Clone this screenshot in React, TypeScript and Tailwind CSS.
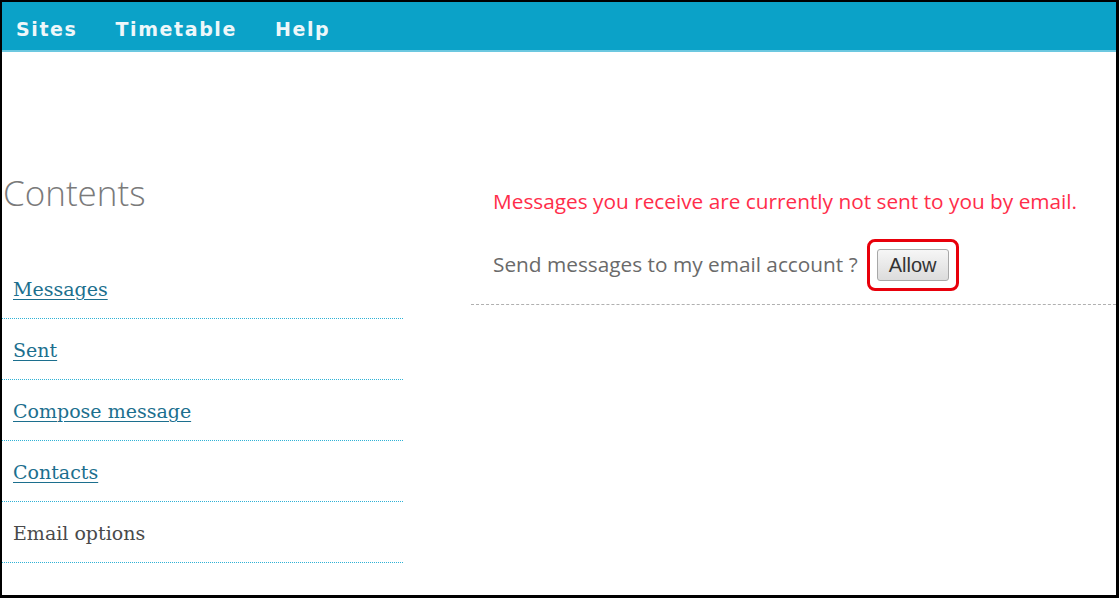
export default function App() {
  const links = [
    { label: "Messages", link: true },
    { label: "Sent", link: true },
    { label: "Compose message", link: true },
    { label: "Contacts", link: true },
    { label: "Email options", link: false },
  ];

  return (
    <div className="w-[1119px] h-[598px] bg-white border-l-2 border-t-2 border-r-[3px] border-b-[3px] border-black overflow-hidden">
      {/* Top nav */}
      <div className="h-[50px] bg-[#0ba2c8] border-b-2 border-[#6cc8e0] flex items-center pl-[14px] pt-[7px] gap-[38px] font-['DejaVu_Sans',sans-serif] font-semibold text-[19px] tracking-[1.6px] text-[#eef7fa]">
        <span>Sites</span>
        <span>Timetable</span>
        <span>Help</span>
      </div>

      <div className="flex">
        {/* Sidebar */}
        <div className="w-[401px] shrink-0 pt-[118px]">
          <h1 className="pl-px font-['Open_Sans',sans-serif] font-light text-[35px] leading-[46px] text-[#7a7a7a]">
            Contents
          </h1>
          <ul className="mt-[42px] font-['DejaVu_Serif',serif] text-[19px]">
            {links.map((l) => (
              <li
                key={l.label}
                className="h-[61px] border-b border-dotted border-[#2fb2d6] pl-[11px] pt-[17px]"
              >
                {l.link ? (
                  <a href="#" className="text-[#1c6f8e] underline underline-offset-[3px] decoration-[1px]">
                    {l.label}
                  </a>
                ) : (
                  <span className="text-[#4a4a4a]">{l.label}</span>
                )}
              </li>
            ))}
          </ul>
        </div>

        {/* Main */}
        <div className="flex-1 ml-[68px] pt-[134px] font-['Open_Sans',sans-serif] text-[20.8px]">
          <p className="pl-[22px] text-[#ff2d4a] leading-[30px]">
            Messages you receive are currently not sent to you by email.
          </p>
          <div className="pl-[22px] mt-[23px] flex items-center">
            <span className="text-[#6a6a6a]">Send messages to my email account ?</span>
            <span className="ml-[9px] rounded-[8px] border-[3px] border-[#e8000b] p-[7px]">
              <button className="block h-[32px] w-[72px] rounded-[3px] border border-[#a8a8a8] bg-gradient-to-b from-[#f6f6f6] to-[#dcdcdc] font-['Liberation_Sans',sans-serif] text-[20px] text-[#333] leading-none">
                Allow
              </button>
            </span>
          </div>
          <div className="mt-[13px] border-b border-dashed border-[#b0b0b0]" />
        </div>
      </div>
    </div>
  );
}
